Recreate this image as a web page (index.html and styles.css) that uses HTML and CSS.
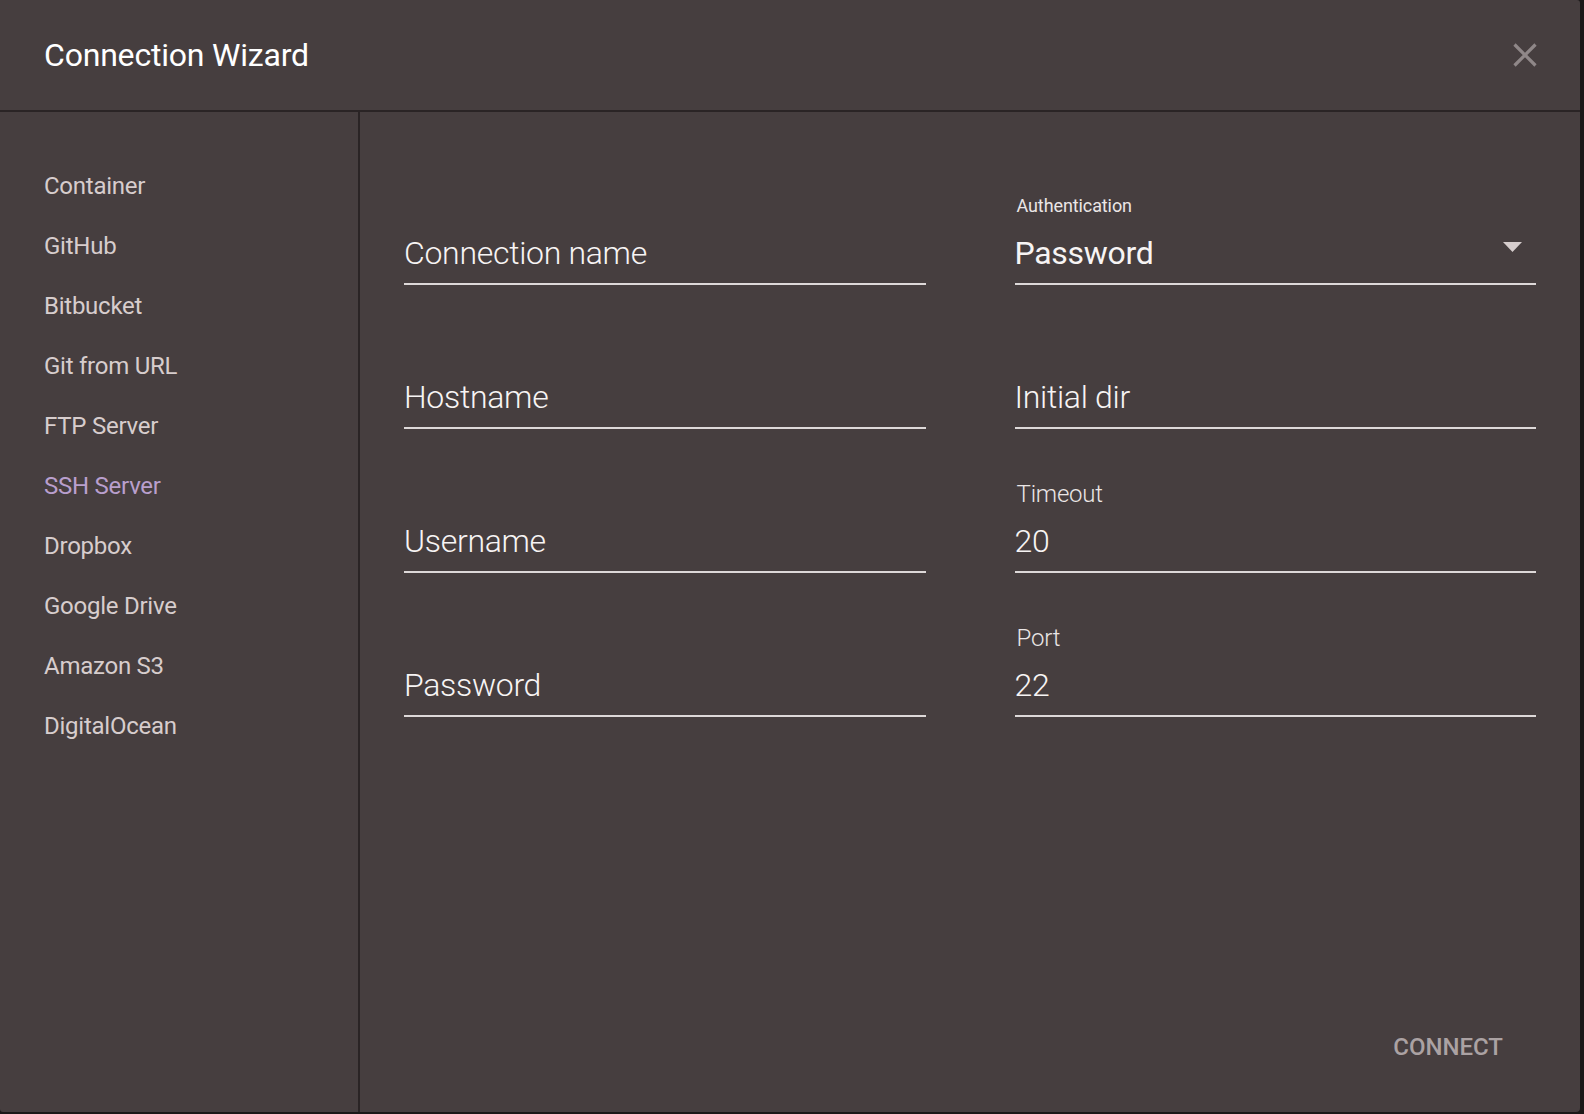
FILE: index.html
```html
<!DOCTYPE html>
<html lang="en">
<head>
<meta charset="utf-8">
<title>Connection Wizard</title>
<link rel="stylesheet" href="styles.css">
</head>
<body>
<div class="dialog">
  <header class="header">
    <h1 class="title">Connection Wizard</h1>
    <button class="close" aria-label="Close">
      <svg width="24" height="24" viewBox="0 0 24 24"><path d="M1.5 1.5 L22.5 22.5 M22.5 1.5 L1.5 22.5" stroke="#8f8788" stroke-width="3.2" fill="none"/></svg>
    </button>
  </header>
  <div class="body">
    <nav class="sidebar">
      <div class="nav-item">Container</div>
      <div class="nav-item">GitHub</div>
      <div class="nav-item">Bitbucket</div>
      <div class="nav-item">Git from URL</div>
      <div class="nav-item">FTP Server</div>
      <div class="nav-item active">SSH Server</div>
      <div class="nav-item">Dropbox</div>
      <div class="nav-item">Google Drive</div>
      <div class="nav-item">Amazon S3</div>
      <div class="nav-item">DigitalOcean</div>
    </nav>
    <main class="main">
      <div class="form">
        <div class="field">
          <div class="label"></div>
          <div class="input placeholder">Connection name</div>
        </div>
        <div class="field">
          <div class="label small">Authentication</div>
          <div class="input select">
            <span class="select-value">Password</span>
            <svg class="arrow" width="19" height="10" viewBox="0 0 19 10"><path d="M0 0 H19 L9.5 10 Z" fill="#d6cdcd"/></svg>
          </div>
        </div>
        <div class="field">
          <div class="label"></div>
          <div class="input placeholder">Hostname</div>
        </div>
        <div class="field">
          <div class="label"></div>
          <div class="input placeholder">Initial dir</div>
        </div>
        <div class="field">
          <div class="label"></div>
          <div class="input placeholder">Username</div>
        </div>
        <div class="field">
          <div class="label">Timeout</div>
          <div class="input">20</div>
        </div>
        <div class="field">
          <div class="label"></div>
          <div class="input placeholder">Password</div>
        </div>
        <div class="field">
          <div class="label">Port</div>
          <div class="input">22</div>
        </div>
      </div>
      <div class="footer">
        <button class="connect">CONNECT</button>
      </div>
    </main>
  </div>
</div>
</body>
</html>
```
FILE: styles.css
```css
html, body {
  margin: 0;
  padding: 0;
  background: #1b1818;
}
body {
  width: 1584px;
  height: 1114px;
  overflow: hidden;
  font-family: Roboto, "Liberation Sans", sans-serif;
}
.dialog {
  width: 1580px;
  height: 1112px;
  background: #463e3f;
  border-radius: 0 3px 4px 3px;
  display: flex;
  flex-direction: column;
  overflow: hidden;
}
.header {
  height: 110px;
  flex: none;
  display: flex;
  align-items: center;
  justify-content: space-between;
  padding: 0 43px 0 44px;
  border-bottom: 2px solid #2a2425;
}
.title {
  margin: 0;
  font-size: 32px;
  font-weight: 400;
  color: #ffffff;
  line-height: 40px;
  letter-spacing: -0.2px;
}
.close {
  width: 24px;
  height: 24px;
  padding: 0;
  border: 0;
  background: none;
  display: block;
}
.close svg { display: block; }
.body {
  flex: 1;
  display: flex;
  min-height: 0;
}
.sidebar {
  flex: none;
  width: 360px;
  box-sizing: border-box;
  border-right: 2px solid #2a2425;
  padding: 44px 0 0 44px;
}
.nav-item {
  font-size: 24px;
  line-height: 60px;
  color: #d7cdcd;
  letter-spacing: -0.25px;
}
.nav-item.active {
  color: #b99fcd;
}
.main {
  flex: 1;
  display: flex;
  flex-direction: column;
  padding: 80px 44px 0 44px;
}
.form {
  display: grid;
  grid-template-columns: 1fr 1fr;
  column-gap: 89px;
  row-gap: 51px;
}
.field {
  display: flex;
  flex-direction: column;
}
.label {
  height: 28px;
  line-height: 28px;
  margin-bottom: 13px;
  padding-left: 2px;
  font-size: 24px;
  font-weight: 300;
  color: #ebe6e6;
  letter-spacing: -0.2px;
}
.label.small {
  font-size: 18px;
  font-weight: 400;
  letter-spacing: -0.1px;
}
.input {
  height: 40px;
  line-height: 40px;
  padding-bottom: 10px;
  border-bottom: 2px solid #ddd8d8;
  font-size: 32px;
  font-weight: 300;
  color: #f7f4f4;
  letter-spacing: -0.3px;
}
.select {
  display: flex;
  align-items: flex-start;
}
.select-value {
  flex: 1;
  font-weight: 400;
}
.arrow {
  margin-top: 9px;
  margin-right: 14px;
  display: block;
}
.footer {
  margin-top: auto;
  display: flex;
  justify-content: flex-end;
  padding-bottom: 47px;
}
.connect {
  background: none;
  border: 0;
  padding: 0 33px 0 16px;
  font-family: Roboto, "Liberation Sans", sans-serif;
  font-size: 24px;
  font-weight: 500;
  line-height: 36px;
  color: #aba2a3;
}
```
